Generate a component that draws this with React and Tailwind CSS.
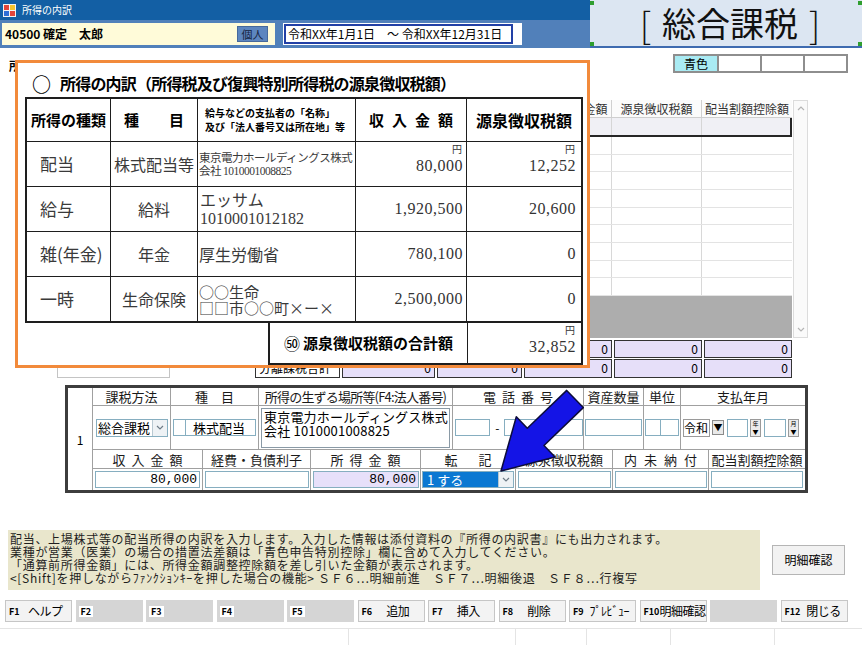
import React from "react";

const SERIF = "font-['Liberation_Serif','Noto_Sans_CJK_JP',serif]";
const MONO = "font-['Liberation_Mono','Noto_Sans_CJK_JP',monospace]";

function TitleIcon() {
  return (
    <svg width="13" height="13" viewBox="0 0 13 13">
      <rect x="0" y="0" width="13" height="13" fill="#f3f3f3" />
      <rect x="1" y="1" width="5" height="5" fill="#e2453b" />
      <rect x="7" y="1" width="5" height="5" fill="#f6c52e" />
      <rect x="1" y="7" width="5" height="5" fill="#2f6fd6" />
      <rect x="7" y="7" width="5" height="5" fill="#e2453b" />
    </svg>
  );
}

function Chevron({ up = false, color = "#6d7b87" }) {
  return (
    <svg width="8" height="5" viewBox="0 0 8 5">
      <path d={up ? "M1 4 L4 1 L7 4" : "M1 1 L4 4 L7 1"} fill="none" stroke={color} strokeWidth="1.2" />
    </svg>
  );
}

function Header() {
  return (
    <div className="flex h-[48px]">
      <div className="flex flex-1 flex-col">
        <div className="flex h-[20px] items-center gap-[6px] bg-[#135fa4] pl-[3px]">
          <TitleIcon />
          <span className="text-[10px] leading-none text-white">所得の内訳</span>
        </div>
        <div className="flex flex-1 items-center gap-[8px] bg-[#5180ba] pl-[2px]">
          <div className="flex h-[22px] w-[273px] items-center justify-between bg-[#fffbd9] pl-[3px] pr-[7px]">
            <span className="text-[12px] font-bold leading-none">40500 確定　太郎</span>
            <span className="flex h-[16px] w-[31px] items-center justify-center border border-[#46699c] bg-[#5d86bf] text-[11px] leading-none text-[#15243f]">
              個人
            </span>
          </div>
          <div className="flex h-[22px] w-[239px] items-center bg-white pl-[1px]">
            <div className="flex h-[20px] w-[229px] items-center whitespace-nowrap border-2 border-[#2240a6] pl-[2px] text-[12px] leading-none">
              令和XX年1月1日　～ 令和XX年12月31日
            </div>
          </div>
        </div>
      </div>
      <div className="relative flex w-[272px] items-center justify-center gap-[11px] border-b-2 border-[#3e6bb0] bg-[#dce6f2] pl-[8px] text-[#111]">
        <span className="text-[36px] font-light leading-[40px]">[</span>
        <span className="text-[34px] leading-[40px]">総合課税</span>
        <span className="text-[36px] font-light leading-[40px]">]</span>
        <span className="absolute left-0 top-[1px] h-[4px] w-[4px] bg-[#2f9e2f]" />
        <span className="absolute right-0 top-[1px] h-[4px] w-[4px] bg-[#2f9e2f]" />
        <span className="absolute bottom-0 left-0 h-[4px] w-[4px] bg-[#2f9e2f]" />
        <span className="absolute bottom-0 right-0 h-[4px] w-[4px] bg-[#2f9e2f]" />
      </div>
    </div>
  );
}

function ColorRow() {
  return (
    <div className="mt-[6px] flex h-[19px] items-start justify-between pl-[9px] pr-[14px]">
      <span className="mt-[5px] text-[12px] font-bold leading-[13px]">所</span>
      <div className="flex h-[19px] gap-[2px] bg-[#8e8e8e] p-[2px]">
        <div className="w-[42px] bg-[#a9ebf3] text-center text-[12px] leading-[15px]">青色</div>
        <div className="w-[41px] bg-white" />
        <div className="w-[41px] bg-white" />
        <div className="w-[41px] bg-white" />
      </div>
    </div>
  );
}

function RightGrid() {
  return (
    <div className="ml-[556px] mt-[27px] flex h-[238px] w-[252px]">
      <div className="flex w-[236px] flex-col">
        <div className="flex h-[18px] border-b border-[#cfcfcf] bg-[#fbfbfb] text-[12px] leading-[17px] text-[#333]">
          <div className="w-[56px] border-r border-[#d0d0d0] text-center">収入金額</div>
          <div className="w-[90px] border-r border-[#d0d0d0] text-center">源泉徴収税額</div>
          <div className="flex-1 text-center">配当割額控除額</div>
        </div>
        <div className="flex h-[19px] border-b-2 border-r-2 border-[#262626] bg-[#f0f0f5]">
          <div className="w-[56px] border-r border-[#d6d6d6]" />
          <div className="w-[90px] border-r border-[#d6d6d6]" />
          <div className="flex-1" />
        </div>
        <div className="flex h-[159px] flex-col">
          {Array.from({ length: 9 }).map((_, i) => (
            <div key={i} className="flex flex-1 border-b border-[#e3e3e3]">
              <div className="w-[56px] border-r border-[#d8d8d8]" />
              <div className="w-[90px] border-r border-[#d8d8d8]" />
              <div className="flex-1" />
            </div>
          ))}
        </div>
        <div className="flex-1 bg-[#adadad]" />
      </div>
      <div className="ml-[1px] flex w-[15px] flex-col items-center justify-between border border-[#dcdcdc] bg-[#fafafa] py-[5px]">
        <Chevron up color="#b5b5b5" />
        <Chevron color="#b5b5b5" />
      </div>
    </div>
  );
}

function SumCell({ w }) {
  return (
    <div className={`${w} h-full border border-[#333] bg-[#e6dff9] pr-[3px] text-right text-[12px] leading-[16px]`}>0</div>
  );
}

function SumRows() {
  const cells = ["w-[93px]", "w-[85px]", "w-[88px]", "w-[88px]", "w-[88px]"];
  return (
    <div className="mt-[2px] flex h-[38px] flex-col">
      <div className="flex h-[19px] gap-[2px] pb-[1px] pl-[255px]">
        <div className="h-full w-[85px] border border-[#333] bg-white" />
        {cells.map((w, i) => (
          <SumCell key={i} w={w} />
        ))}
      </div>
      <div className="flex h-[19px] gap-[2px] pl-[57px]">
        <div className="h-full w-[113px] border border-[#c4c4c4] bg-white" />
        <div className="h-full w-[81px]" />
        <div className="h-full w-[85px] whitespace-nowrap border border-[#333] bg-white pl-[3px] text-[12px] leading-[16px]">分離課税合計</div>
        {cells.map((w, i) => (
          <SumCell key={i} w={w} />
        ))}
      </div>
    </div>
  );
}

function Spin({ label }) {
  return (
    <div className="ml-[2px] flex h-[18px] w-[11px] flex-col items-center justify-center border border-[#9a9a9a] bg-[#ececec]">
      <span className="text-[6px] leading-[8px]">{label}</span>
      <span className="text-[6px] leading-[8px]">▼</span>
    </div>
  );
}

function EntryForm() {
  const hdr = "flex h-full items-center justify-center whitespace-nowrap border-r border-[#a0a0a0] text-[13px] leading-none text-[#1a1a1a]";
  const cell = "flex h-full items-center border-r border-[#a0a0a0]";
  const inp = "h-[17px] border border-[#86aec0] bg-white";
  return (
    <div className="ml-[65px] mt-[7px] flex h-[108px] w-[743px] border-[3px] border-[#3d3d3d] bg-white">
      <div className="flex w-[25px] items-center justify-center border-r border-[#a0a0a0] pt-[2px] text-[12px]">1</div>
      <div className="flex flex-1 flex-col">
        <div className="flex h-[18px] border-b border-[#a0a0a0]">
          <div className={`${hdr} w-[78px]`}>課税方法</div>
          <div className={`${hdr} w-[88px]`}>種　目</div>
          <div className={`${hdr} w-[194px] text-[12px] tracking-[-0.8px]`}>所得の生ずる場所等(F4:法人番号)</div>
          <div className={`${hdr} w-[131px] pl-[6px] tracking-[6px]`}>電話番号</div>
          <div className={`${hdr} w-[60px]`}>資産数量</div>
          <div className={`${hdr} w-[37px]`}>単位</div>
          <div className={`${hdr} flex-1 border-r-0`}>支払年月</div>
        </div>
        <div className="flex h-[44px] border-b border-[#a0a0a0]">
          <div className={`${cell} w-[78px] pl-[3px]`}>
            <div className="flex h-[18px] w-[72px] border border-[#86aec0] bg-white">
              <span className="flex-1 whitespace-nowrap pl-[1px] text-[13px] leading-[16px]">総合課税</span>
              <span className="flex w-[15px] items-center justify-center border-l border-[#b9c9d2] bg-[#eef2f5]">
                <Chevron />
              </span>
            </div>
          </div>
          <div className={`${cell} w-[88px] pl-[2px]`}>
            <div className={`${inp} w-[13px] bg-[#fffbd6]`} />
            <div className={`${inp} w-[70px] whitespace-nowrap border-l-0 pl-[7px] text-[13px] leading-[15px]`}>株式配当</div>
          </div>
          <div className={`${cell} w-[194px] pl-[2px]`}>
            <div className="h-[40px] w-[189px] whitespace-nowrap border border-[#8a9aa6] bg-white pl-[2px] pt-[1px] text-[13px] leading-[14px] tracking-[0.2px]">
              東京電力ホールディングス株式
              <br />
              会社 1010001008825
            </div>
          </div>
          <div className={`${cell} w-[131px] pl-[2px]`}>
            <div className={`${inp} w-[36px]`} />
            <span className="mx-[5px] text-[12px]">-</span>
            <div className={`${inp} w-[36px]`} />
            <span className="mx-[3px] text-[12px]">-</span>
            <div className={`${inp} w-[34px]`} />
          </div>
          <div className={`${cell} w-[60px] pl-[1px]`}>
            <div className={`${inp} w-[57px]`} />
          </div>
          <div className={`${cell} w-[37px] pl-[1px]`}>
            <div className={`${inp} w-[16px] bg-[#fffbd6]`} />
            <div className={`${inp} w-[18px] border-l-0`} />
          </div>
          <div className={`${cell} flex-1 border-r-0 pl-[2px]`}>
            <div className="flex h-[18px] w-[27px] items-center whitespace-nowrap border border-[#9a9a9a] bg-white text-[12px] leading-none">令和</div>
            <div className="ml-[2px] flex h-[15px] w-[12px] items-center justify-center border border-[#8a8a8a] bg-[#e9e9e9] text-[9px] leading-none">▼</div>
            <div className={`${inp} ml-[3px] h-[18px] w-[21px]`} />
            <Spin label="年" />
            <div className={`${inp} ml-[3px] h-[18px] w-[22px]`} />
            <Spin label="月" />
          </div>
        </div>
        <div className="flex h-[19px] border-b border-[#a0a0a0]">
          <div className={`${hdr} w-[110px] pl-[6px] tracking-[6px]`}>収入金額</div>
          <div className={`${hdr} w-[108px]`}>経費・負債利子</div>
          <div className={`${hdr} w-[110px] pl-[6px] tracking-[6px]`}>所得金額</div>
          <div className={`${hdr} w-[95px] pl-[4px] tracking-[4px]`}>転　記</div>
          <div className={`${hdr} w-[97px]`}>源泉徴収税額</div>
          <div className={`${hdr} w-[96px] pl-[7px] tracking-[7px]`}>内未納付</div>
          <div className={`${hdr} flex-1 border-r-0`}>配当割額控除額</div>
        </div>
        <div className="flex flex-1">
          <div className={`${cell} w-[110px] pl-[2px]`}>
            <div className={`${inp} w-[105px] pr-[2px] text-right text-[13px] leading-[15px] ${MONO}`}>80,000</div>
          </div>
          <div className={`${cell} w-[108px] pl-[2px]`}>
            <div className={`${inp} w-[104px]`} />
          </div>
          <div className={`${cell} w-[110px] pl-[2px]`}>
            <div className={`h-[17px] w-[106px] border border-[#86aec0] bg-[#e7e0fa] pr-[2px] text-right text-[13px] leading-[15px] ${MONO}`}>80,000</div>
          </div>
          <div className={`${cell} w-[95px] pl-[1px]`}>
            <div className="flex h-[17px] w-[92px] border border-[#86aec0] bg-white">
              <span className="flex-1 whitespace-nowrap bg-[#0b78d2] pl-[4px] text-[13px] leading-[15px] text-white">1 する</span>
              <span className="flex w-[15px] items-center justify-center border-l border-[#b9c9d2] bg-[#eef2f5]">
                <Chevron />
              </span>
            </div>
          </div>
          <div className={`${cell} w-[97px] pl-[2px]`}>
            <div className={`${inp} w-[93px]`} />
          </div>
          <div className={`${cell} w-[96px] pl-[2px]`}>
            <div className={`${inp} w-[92px]`} />
          </div>
          <div className={`${cell} flex-1 border-r-0 pl-[2px]`}>
            <div className={`${inp} w-[92px]`} />
          </div>
        </div>
      </div>
    </div>
  );
}

function InfoPanel() {
  return (
    <div className="mt-[37px] flex h-[60px] items-center pl-[8px]">
      <div className="h-[60px] w-[752px] whitespace-pre bg-[#e9e6cc] pl-[2px] pt-[2px] text-[12px] leading-[13px] tracking-[0.7px] text-[#1e1e1e]">
        <p>配当、上場株式等の配当所得の内訳を入力します。入力した情報は添付資料の『所得の内訳書』にも出力されます。</p>
        <p>業種が営業（医業）の場合の措置法差額は「青色申告特別控除」欄に含めて入力してください。</p>
        <p>「通算前所得金額」には、所得金額調整控除額を差し引いた金額が表示されます。</p>
        <p>{"<[Shift]を押しながらﾌｧﾝｸｼｮﾝｷｰを押した場合の機能> ＳＦ６…明細前進　ＳＦ７…明細後退　ＳＦ８…行複写"}</p>
      </div>
      <button className="ml-[12px] h-[30px] w-[73px] border border-[#b5b5b5] bg-[#f2f2f2] text-[12px] leading-none">明細確認</button>
    </div>
  );
}

const fkeys = [
  { k: "F1", label: "ヘルプ", on: true },
  { k: "F2" },
  { k: "F3" },
  { k: "F4" },
  { k: "F5" },
  { k: "F6", label: "追加", on: true },
  { k: "F7", label: "挿入", on: true },
  { k: "F8", label: "削除", on: true },
  { k: "F9", label: "ﾌﾟﾚﾋﾞｭｰ", on: true },
  { k: "F10", label: "明細確認", on: true },
  { k: "" },
  { k: "F12", label: "閉じる", on: true },
];

function FunctionKeys() {
  return (
    <div className="mt-[10px] flex h-[22px] gap-[3.5px] pl-[5px]">
      {fkeys.map((f, i) =>
        f.on ? (
          <div key={i} className="flex w-[67px] items-center whitespace-nowrap border border-[#c6c6c6] bg-[#f3f3f3] pl-[3px]">
            <span className="text-[9px] font-bold leading-none">{f.k}</span>
            <span className="flex-1 text-center text-[12px] leading-none tracking-[-0.5px]">{f.label}</span>
          </div>
        ) : (
          <div key={i} className="flex w-[67px] items-center bg-[#d5d5d5] pl-[3px]">
            {f.k && <span className="bg-white px-[2px] text-[9px] font-bold leading-[11px]">{f.k}</span>}
          </div>
        )
      )}
    </div>
  );
}

function StatusBar() {
  return (
    <div className="mt-[6px] flex h-[17px] border-t border-[#e4e4e4]">
      <div className="w-[349px] border-r border-[#e4e4e4]" />
      <div className="w-[167px] border-r border-[#e4e4e4]" />
      <div className="w-[71px] border-r border-[#e4e4e4]" />
      <div className="w-[84px] border-r border-[#e4e4e4]" />
      <div className="w-[104px] border-r border-[#e4e4e4]" />
      <div className="flex-1" />
    </div>
  );
}

const breakdown = [
  {
    kind: "配当",
    item: "株式配当等",
    payer: (
      <div className="whitespace-nowrap pl-[1px] text-[11.5px] leading-[13px] tracking-[-0.5px]">
        東京電力ホールディングス株式
        <br />
        会社 <span className={SERIF}>1010001008825</span>
      </div>
    ),
    income: "80,000",
    tax: "12,252",
    yen: true,
  },
  {
    kind: "給与",
    item: "給料",
    payer: (
      <div className="whitespace-nowrap pl-[2px] text-[16px] leading-[18px]">
        エッサム
        <br />
        <span className={SERIF}>1010001012182</span>
      </div>
    ),
    income: "1,920,500",
    tax: "20,600",
  },
  {
    kind: "雑(年金)",
    item: "年金",
    payer: <div className="whitespace-nowrap pl-[1px] text-[16px] leading-[18px]">厚生労働省</div>,
    income: "780,100",
    tax: "0",
  },
  {
    kind: "一時",
    item: "生命保険",
    payer: (
      <div className="whitespace-nowrap pl-[1px] pt-[2px] text-[15px] leading-[16px]">
        ○○生命
        <br />
        □□市○○町×ー×
      </div>
    ),
    income: "2,500,000",
    tax: "0",
  },
];

function Amount({ value, yen, w, pad }) {
  return (
    <div className={`${w} flex flex-col items-end ${yen ? "justify-start pt-[1px]" : "justify-center"} ${pad}`}>
      {yen && <span className="pr-[1px] text-[10px] leading-[11px] text-[#333]">円</span>}
      <span className={`${SERIF} text-[16px] leading-[20px] tracking-[0.5px] text-[#333] ${yen ? "mt-[2px]" : ""}`}>{value}</span>
    </div>
  );
}

function Breakdown() {
  const line = "border-[#1e1e1e]";
  return (
    <div className="absolute left-[15px] top-[60px] h-[308px] w-[575px] border-[3px] border-[#f28a3b] bg-white">
      <div className="flex h-[34px] items-center gap-[9px] pl-[14px] pt-[6px] font-bold">
        <span className="text-[19px] leading-none">○</span>
        <span className="text-[16px] leading-none tracking-[-0.8px]">所得の内訳（所得税及び復興特別所得税の源泉徴収税額）</span>
      </div>
      <div className={`ml-[7px] w-[558px] border-2 ${line}`}>
        <div className={`flex h-[43px] border-b ${line}`}>
          <div className={`flex w-[84px] items-center justify-center border-r ${line} text-[15px] font-bold`}>所得の種類</div>
          <div className={`flex w-[87px] items-center justify-center border-r ${line} text-[15px] font-bold`}>種　　目</div>
          <div className={`flex w-[158px] flex-col justify-center whitespace-nowrap border-r ${line} pl-[7px] text-[10px] font-bold leading-[14px]`}>
            <span>給与などの支払者の「名称」</span>
            <span>及び「法人番号又は所在地」等</span>
          </div>
          <div className={`flex w-[111px] items-center justify-center border-r ${line} pl-[8px] text-[15px] font-bold tracking-[8px]`}>収入金額</div>
          <div className="flex flex-1 items-center justify-center text-[16px] font-bold">源泉徴収税額</div>
        </div>
        {breakdown.map((r, i) => (
          <div key={i} className={`flex ${i < 3 ? `h-[45px] border-b ${line}` : "h-[44px]"} text-[#3a3a3a]`}>
            <div className={`flex w-[84px] items-center whitespace-nowrap border-r ${line} pl-[13px] text-[17px]`}>{r.kind}</div>
            <div className={`flex w-[87px] items-center justify-center border-r ${line} text-[16px]`}>{r.item}</div>
            <div className={`flex w-[158px] items-center overflow-hidden border-r ${line}`}>{r.payer}</div>
            <Amount value={r.income} yen={r.yen} w={`w-[111px] border-r ${line}`} pad="pr-[3px]" />
            <Amount value={r.tax} yen={r.yen} w="flex-1" pad="pr-[5px]" />
          </div>
        ))}
      </div>
      <div className={`ml-[250px] flex h-[42px] w-[315px] border-2 border-t-0 ${line}`}>
        <div className={`flex w-[198px] items-center justify-center gap-[3px] whitespace-nowrap border-r ${line} text-[15px] font-bold`}>
          <span className="text-[16px] font-normal leading-none">㊿</span>
          <span>源泉徴収税額の合計額</span>
        </div>
        <Amount value="32,852" yen w="flex-1" pad="pr-[5px]" />
      </div>
    </div>
  );
}

function Arrow() {
  return (
    <svg className="pointer-events-none absolute left-0 top-0" width="862" height="645" viewBox="0 0 862 645">
      <polygon
        points="501,471 555,457 544,445.5 583.3,407.6 566.7,390.4 527.3,428.3 516.3,416.7"
        fill="#1414e6"
        stroke="#0c0c3a"
        strokeWidth="1.5"
        strokeLinejoin="round"
      />
    </svg>
  );
}

export default function App() {
  return (
    <div className="relative h-[645px] w-[862px] overflow-hidden bg-white font-['Noto_Sans_CJK_JP',sans-serif] text-black">
      <Header />
      <ColorRow />
      <RightGrid />
      <SumRows />
      <EntryForm />
      <InfoPanel />
      <FunctionKeys />
      <StatusBar />
      <Breakdown />
      <Arrow />
    </div>
  );
}
